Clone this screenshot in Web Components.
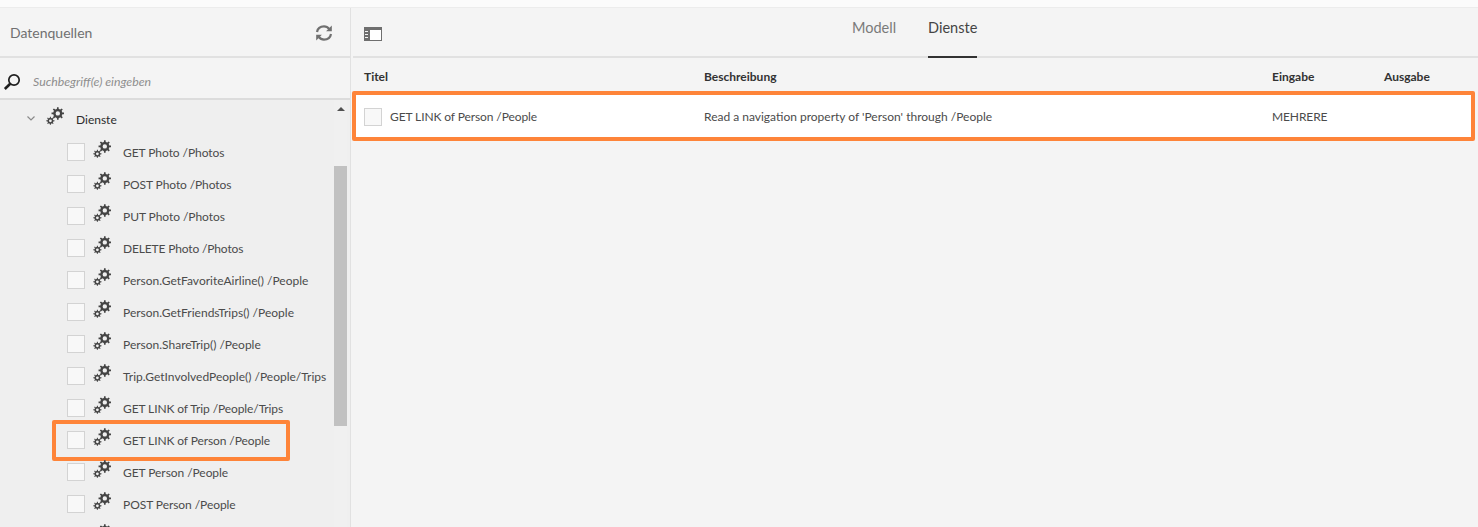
<!DOCTYPE html>
<html lang="de">
<head>
<meta charset="utf-8">
<title>Datenquellen</title>
<style>
html,body{margin:0;height:100%;overflow:hidden;background:#f4f4f4;}
body{font-family:"Lato","Open Sans",sans-serif;font-size:12px;color:#4b4b4b;}
</style>
</head>
<body>
<model-editor>
  <source-panel slot="left" title-text="Datenquellen">
    <tree-group label="Dienste">
      <tree-item style="letter-spacing:-.06px">GET Photo /Photos</tree-item>
      <tree-item style="letter-spacing:-.1px">POST Photo /Photos</tree-item>
      <tree-item style="letter-spacing:-.06px">PUT Photo /Photos</tree-item>
      <tree-item style="letter-spacing:-.15px">DELETE Photo /Photos</tree-item>
      <tree-item>Person.GetFavoriteAirline() /People</tree-item>
      <tree-item>Person.GetFriendsTrips() /People</tree-item>
      <tree-item>Person.ShareTrip() /People</tree-item>
      <tree-item>Trip.GetInvolvedPeople() /People/Trips</tree-item>
      <tree-item style="letter-spacing:-.1px">GET LINK of Trip /People/Trips</tree-item>
      <tree-item style="letter-spacing:-.1px" marked>GET LINK of Person /People</tree-item>
      <tree-item style="letter-spacing:-.06px">GET Person /People</tree-item>
      <tree-item style="letter-spacing:-.06px">POST Person /People</tree-item>
      <tree-item></tree-item>
    </tree-group>
  </source-panel>
  <services-panel slot="right">
    <service-row title-text="GET LINK of Person /People" desc="Read a navigation property of 'Person' through /People" input="MEHRERE"></service-row>
  </services-panel>
</model-editor>

<script>
const gearPath = (cx, cy, r1, r2, teeth) => {
  let d = "";
  const step = Math.PI * 2 / teeth;
  for (let i = 0; i < teeth; i++) {
    const a = i * step;
    const pts = [[r1, a - step * .5], [r1, a - step * .26], [r2, a - step * .16], [r2, a + step * .16], [r1, a + step * .26]];
    pts.forEach((p, n) => {
      const x = (cx + p[0] * Math.cos(p[1])).toFixed(2);
      const y = (cy + p[0] * Math.sin(p[1])).toFixed(2);
      d += (i == 0 && n == 0 ? "M" : "L") + x + " " + y;
    });
  }
  return d + "Z";
};
const holePath = (cx, cy, r) => `M${cx + r} ${cy}a${r} ${r} 0 1 0-${r * 2} 0a${r} ${r} 0 1 0 ${r * 2} 0Z`;

class GearIcon extends HTMLElement {
  constructor() {
    super();
    const shadow = this.attachShadow({mode: "open"});
    shadow.innerHTML = `
<style>
:host{display:block;width:18px;height:18px;flex:none;}
svg{display:block;}
</style>
<svg width="18" height="18" viewBox="0 0 18 18">
  <path fill="#444" fill-rule="evenodd" d="${gearPath(11.8, 6.4, 4.6, 6.3, 8)}${holePath(11.8, 6.4, 2.2)}"/>
  <path fill="#444" fill-rule="evenodd" d="${gearPath(4.4, 13.8, 2.9, 4.1, 8)}${holePath(4.4, 13.8, 1.4)}"/>
</svg>`;
  }
}
customElements.define("gear-icon", GearIcon);

class CheckBox extends HTMLElement {
  constructor() {
    super();
    const shadow = this.attachShadow({mode: "open"});
    shadow.innerHTML = `
<style>
:host{display:block;width:18px;height:18px;box-sizing:border-box;flex:none;background:#f8f8f8;border:1px solid #d3d3d3;}
</style>`;
  }
}
customElements.define("check-box", CheckBox);

class TreeItem extends HTMLElement {
  constructor() {
    super();
    const shadow = this.attachShadow({mode: "open"});
    shadow.innerHTML = `
<style>
:host{display:flex;position:relative;align-items:center;height:32px;padding-left:67px;font-size:12px;color:#4b4b4b;white-space:nowrap;}
gear-icon{margin:-6px 0 0 8px;}
.txt{margin-left:12px;}
.mark{display:none;position:absolute;left:52px;top:-4px;width:238px;height:41px;box-sizing:border-box;border:4px solid #fe8439;border-radius:2px;}
:host([marked]) .mark{display:block;}
</style>
<check-box></check-box><gear-icon></gear-icon><span class="txt"><slot></slot></span><div class="mark"></div>`;
  }
}
customElements.define("tree-item", TreeItem);

class TreeGroup extends HTMLElement {
  constructor() {
    super();
    const shadow = this.attachShadow({mode: "open"});
    shadow.innerHTML = `
<style>
:host{display:block;padding-top:3px;}
.head{display:flex;align-items:center;height:33px;padding-left:27px;color:#2c2c2c;font-size:12px;}
.head svg{margin-top:-3px;}
gear-icon{margin:-7px 0 0 11px;}
.label{margin-left:12px;}
</style>
<div class="head">
  <svg width="8" height="5" viewBox="0 0 8 5"><path d="M.5.5 4 4 7.500.5" fill="none" stroke="#8a8a8a" stroke-width="1.200"/></svg>
  <gear-icon></gear-icon><span class="label"></span>
</div>
<slot></slot>`;
    shadow.querySelector(".label").textContent = this.getAttribute("label");
  }
}
customElements.define("tree-group", TreeGroup);

class SourcePanel extends HTMLElement {
  constructor() {
    super();
    const shadow = this.attachShadow({mode: "open"});
    shadow.innerHTML = `
<style>
:host{display:flex;flex-direction:column;width:351px;box-sizing:border-box;height:100%;border-right:1px solid #e1e1e1;overflow:hidden;}
.head{display:flex;flex:none;align-items:center;justify-content:space-between;height:50px;box-sizing:border-box;padding:1px 17px 0 10px;border-bottom:2px solid #e1e1e1;font-size:14px;color:#707070;}
.head svg{display:block;}
.search{display:flex;flex:none;align-items:center;height:42px;box-sizing:border-box;padding:6px 0 0 3px;border-bottom:2px solid #dcdcdc;}
.search input{all:unset;margin-left:12px;font:italic 12.3px "Lato","Open Sans",sans-serif;width:280px;}
.search input::placeholder{color:#8e8e8e;opacity:1;}
.body{flex:1;display:flex;background:#efefef;min-height:0;overflow:hidden;}
.tree{flex:none;width:334px;overflow:hidden;}
.bar{flex:none;width:13px;position:relative;background:#f0f0f0;}
.bar i{display:block;width:0;height:0;margin:7px auto 0;border:4px solid transparent;border-top:0;border-bottom:4px solid #505050;}
.thumb{margin-top:55px;height:260px;background:#c1c1c1;}
</style>
<div class="head"><span class="t"></span>
  <svg width="18" height="18" viewBox="0 0 18 18" fill="none" stroke="#707070" stroke-width="2.200">
    <path d="M2 8C2.600 4.600 5.500 2.400 9 2.400c2.300 0 4 1 5.200 2.600"/>
    <path d="M16 10c-.6 3.400-3.500 5.600-7 5.600-2.300 0-4-1-5.200-2.600"/>
    <path d="M16.800 1.500v5.700h-5.700z" fill="#707070" stroke="none"/>
    <path d="M1.200 16.500v-5.700h5.700z" fill="#707070" stroke="none"/>
  </svg>
</div>
<div class="search">
  <svg width="18" height="18" viewBox="0 0 18 18" fill="none">
    <circle cx="11" cy="8" r="5.200" stroke="#1f1f1f" stroke-width="1.700"/>
    <path d="M7.200 11.800 1.800 17" stroke="#1f1f1f" stroke-width="2.600"/>
  </svg>
  <input placeholder="Suchbegriff(e) eingeben">
</div>
<div class="body">
  <div class="tree"><slot></slot></div>
  <div class="bar"><i></i><div class="thumb"></div></div>
</div>`;
    shadow.querySelector(".t").textContent = this.getAttribute("title-text");
  }
}
customElements.define("source-panel", SourcePanel);

class ServiceRow extends HTMLElement {
  constructor() {
    super();
    const shadow = this.attachShadow({mode: "open"});
    shadow.innerHTML = `
<style>
:host{display:grid;grid-template-columns:340px 568px 112px 1fr;align-items:center;height:50px;box-sizing:border-box;margin:0 3px 0 1px;padding:1px 0 0 8px;background:#fff;border:4px solid #fe8439;border-radius:2px;font-size:12px;color:#4b4b4b;}
.first{display:flex;align-items:center;gap:8px;}
.a,.c{letter-spacing:-.1px;}
</style>
<div class="first"><check-box></check-box><span class="a"></span></div><span class="b"></span><span class="c"></span><span></span>`;
    shadow.querySelector(".a").textContent = this.getAttribute("title-text");
    shadow.querySelector(".b").textContent = this.getAttribute("desc");
    shadow.querySelector(".c").textContent = this.getAttribute("input");
  }
}
customElements.define("service-row", ServiceRow);

class ServicesPanel extends HTMLElement {
  constructor() {
    super();
    const shadow = this.attachShadow({mode: "open"});
    shadow.innerHTML = `
<style>
:host{display:flex;flex-direction:column;flex:1;min-width:0;}
.top{display:flex;flex:none;align-items:flex-start;height:50px;box-sizing:border-box;margin-left:2px;padding-left:11px;border-bottom:2px solid #e1e1e1;}
.panel{margin-top:19px;display:block;}
.tabs{display:flex;gap:32px;margin-left:470px;font-size:14.5px;color:#7a7a7a;height:50px;}
.tab{height:100%;box-sizing:border-box;padding-top:11px;}
.tab.on{color:#444;border-bottom:2px solid #323232;}
.cols{display:grid;grid-template-columns:340px 568px 112px 1fr;flex:none;align-items:center;height:33px;box-sizing:border-box;padding:3px 0 0 13px;font-size:12px;font-weight:700;color:#323232;}
</style>
<div class="top">
  <svg class="panel" width="18" height="14" viewBox="0 0 18 14">
    <path fill="#6e6e6e" d="M0 0h18v14H0z"/><path fill="#fff" d="M6 3h11v10H6z"/>
    <path fill="#f4f4f4" d="M1 4h3v1H1zM1 7h3v1H1zM1 10h3v1H1z"/>
  </svg>
  <div class="tabs"><div class="tab">Modell</div><div class="tab on">Dienste</div></div>
</div>
<div class="cols"><span>Titel</span><span>Beschreibung</span><span>Eingabe</span><span>Ausgabe</span></div>
<slot></slot>`;
  }
}
customElements.define("services-panel", ServicesPanel);

class ModelEditor extends HTMLElement {
  constructor() {
    super();
    const shadow = this.attachShadow({mode: "open"});
    shadow.innerHTML = `
<style>
:host{display:flex;flex-direction:column;height:527px;overflow:hidden;}
.strip{flex:none;height:8px;background:#fbfbfb;border-bottom:1px solid #ececec;box-sizing:border-box;}
.main{display:flex;flex:1;min-height:0;}
</style>
<div class="strip"></div>
<div class="main"><slot name="left"></slot><slot name="right"></slot></div>`;
  }
}
customElements.define("model-editor", ModelEditor);
</script>
</body>
</html>
